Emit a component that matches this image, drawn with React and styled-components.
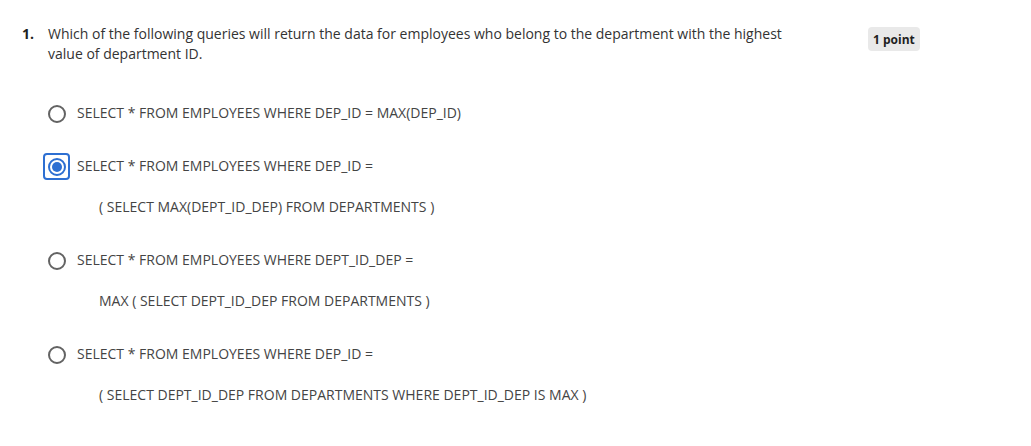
import React from "react";
import styled, { createGlobalStyle } from "styled-components";

const GlobalStyle = createGlobalStyle`
  body {
    margin: 0;
    background: #ffffff;
    font-family: "Open Sans", "Noto Sans", sans-serif;
    color: #1f1f1f;
  }
`;

const Page = styled.div`
  padding: 24px 0 0 22px;
`;

const QuestionRow = styled.div`
  display: flex;
  align-items: flex-start;
`;

const Number = styled.div`
  width: 26px;
  font-size: 14px;
  line-height: 20px;
  font-weight: 700;
`;

const Prompt = styled.div`
  width: 760px;
  font-size: 14px;
  line-height: 20px;
  color: #333333;
`;

const Badge = styled.div`
  margin: 3px 0 0 60px;
  padding: 0 5px;
  height: 24px;
  display: flex;
  align-items: center;
  background: #e9e9e9;
  border-radius: 4px;
  font-size: 12px;
  font-weight: 700;
  color: #1f1f1f;
  white-space: nowrap;
`;

const Options = styled.div`
  display: flex;
  flex-direction: column;
  gap: 26px;
  margin: 36px 0 0 21px;
`;

const Option = styled.label`
  display: flex;
  align-items: flex-start;
  gap: 7px;
`;

const RadioBox = styled.span`
  flex: 0 0 auto;
  width: 27px;
  height: 27px;
  box-sizing: border-box;
  display: flex;
  align-items: center;
  justify-content: center;
  border: 2px solid ${(p) => (p.$focused ? "#2d6fd2" : "transparent")};
  border-radius: 4px;
`;

const Circle = styled.span`
  width: 18px;
  height: 18px;
  box-sizing: border-box;
  border-radius: 50%;
  border: 2px solid ${(p) => (p.$checked ? "#2d6fd2" : "#636363")};
  display: flex;
  align-items: center;
  justify-content: center;
  &::after {
    content: "";
    display: ${(p) => (p.$checked ? "block" : "none")};
    width: 10px;
    height: 10px;
    border-radius: 50%;
    background: #2d6fd2;
  }
`;

const Label = styled.div`
  display: flex;
  flex-direction: column;
  gap: 21px;
  padding: 3px 0 4px;
  font-size: 14px;
  line-height: 20px;
  color: #444444;
`;

const Line = styled.div`
  padding-left: ${(p) => (p.$indent ? "22px" : "0")};
`;

const options = [
  { lines: ["SELECT * FROM EMPLOYEES WHERE DEP_ID = MAX(DEP_ID)"] },
  {
    checked: true,
    lines: [
      "SELECT * FROM EMPLOYEES WHERE DEP_ID =",
      "( SELECT MAX(DEPT_ID_DEP) FROM DEPARTMENTS )",
    ],
  },
  {
    lines: [
      "SELECT * FROM EMPLOYEES WHERE DEPT_ID_DEP =",
      "MAX ( SELECT DEPT_ID_DEP FROM DEPARTMENTS )",
    ],
  },
  {
    lines: [
      "SELECT * FROM EMPLOYEES WHERE DEP_ID =",
      "( SELECT DEPT_ID_DEP FROM DEPARTMENTS WHERE DEPT_ID_DEP IS MAX )",
    ],
  },
];

export default function App() {
  return (
    <Page>
      <GlobalStyle />
      <QuestionRow>
        <Number>1.</Number>
        <Prompt>
          Which of the following queries will return the data for employees who
          belong to the department with the highest value of department ID.
        </Prompt>
        <Badge>1 point</Badge>
      </QuestionRow>
      <Options>
        {options.map((o, i) => (
          <Option key={i}>
            <RadioBox $focused={o.checked}>
              <Circle $checked={o.checked} />
            </RadioBox>
            <Label>
              {o.lines.map((l, j) => (
                <Line key={j} $indent={j > 0}>
                  {l}
                </Line>
              ))}
            </Label>
          </Option>
        ))}
      </Options>
    </Page>
  );
}
